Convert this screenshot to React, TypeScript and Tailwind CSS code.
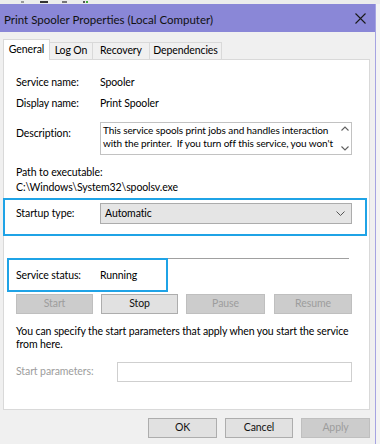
import React from "react";

const font = { fontFamily: 'Lato, "Noto Sans", sans-serif' };

function Btn({ label, w, disabled }: { label: string; w: string; disabled?: boolean }) {
  return (
    <div
      className={`${w} h-[20px] flex items-center justify-center border text-[10.5px] ${
        disabled ? "bg-[#cccccc] border-[#bfbfbf] text-[#9d9d9d]" : "bg-[#e1e1e1] border-[#adadad] text-[#111]"
      }`}
    >
      {label}
    </div>
  );
}

export default function App() {
  return (
    <div className="relative w-[380px] h-[444px] overflow-hidden bg-[#f4f4f4] text-black tracking-[-0.1px]" style={font}>
      {/* background strip */}
      <div className="h-[4px] bg-[#ececec] flex items-start">
        <div className="ml-[21px] mt-[1px] w-[3px] h-[2px] bg-[#9a9a9a]" />
        <div className="ml-[16px] mt-[1px] w-[8px] h-[2px] bg-[#333]" />
        <div className="ml-[14px] mt-[1px] w-[5px] h-[2px] bg-[#777]" />
        <div className="ml-[16px] mt-[1px] w-[2px] h-[2px] bg-[#555]" />
        <div className="ml-[1px] mt-[1px] w-[2px] h-[2px] bg-[#3fae3a]" />
      </div>
      <div className="flex">
        <div className="w-[376px] h-[440px] border-r border-[#a6a4e2] bg-[#f0f0f0] flex flex-col">
          {/* title bar */}
          <div className="h-[28px] bg-[#8a87d7] flex items-center justify-between pl-[4px] pr-[9px]">
            <span className="text-[11.5px] text-[#111] tracking-[0px] mt-[4px]">Print Spooler Properties (Local Computer)</span>
            <svg width="11" height="11" viewBox="0 0 11 11" className="mt-[1px]">
              <path d="M0.5 0.5 L10.5 10.5 M10.5 0.5 L0.5 10.5" stroke="#1a1a1a" strokeWidth="1.1" />
            </svg>
          </div>
          {/* tabs */}
          <div className="pl-[3px] pt-[7px] flex items-end h-[28px] relative z-10 text-[10.5px]">
            <div className="w-[47px] h-[21px] bg-white border border-b-0 border-[#d9d9d9] flex items-center justify-center pb-[1px]">
              General
            </div>
            <div className="w-[43px] h-[18px] border border-l-0 border-[#d9d9d9] flex items-center justify-center">Log On</div>
            <div className="w-[57px] h-[18px] border border-l-0 border-[#d9d9d9] flex items-center justify-center">Recovery</div>
            <div className="w-[72px] h-[18px] border border-l-0 border-[#d9d9d9] flex items-center justify-center">Dependencies</div>
          </div>
          {/* panel */}
          <div className="ml-[3px] -mt-[1px] w-[367px] h-[351px] bg-white border border-[#d9d9d9] pl-[12px] pt-[12px] text-[10.5px] flex flex-col">
            <div className="flex h-[21px] items-center">
              <div className="w-[84px]">Service name:</div>
              <div>Spooler</div>
            </div>
            <div className="flex h-[21px] items-center">
              <div className="w-[84px]">Display name:</div>
              <div>Print Spooler</div>
            </div>
            <div className="flex mt-[8px] items-start">
              <div className="w-[84px] pt-[4px]">Description:</div>
              <div className="w-[252px] h-[33px] border border-[#c2c2c2] flex">
                <div className="flex-1 pl-[2px] pt-[1px] text-[10px] leading-[13px] overflow-hidden whitespace-nowrap">
                  <div>This service spools print jobs and handles interaction</div>
                  <div>with the printer.&nbsp; If you turn off this service, you won't</div>
                </div>
                <div className="w-[13px] flex flex-col items-center justify-between py-[3px] bg-white">
                  <svg width="8" height="5" viewBox="0 0 8 5">
                    <path d="M0.5 4.5 L4 1 L7.5 4.5" stroke="#606060" fill="none" strokeWidth="1.1" />
                  </svg>
                  <svg width="8" height="5" viewBox="0 0 8 5">
                    <path d="M0.5 0.5 L4 4 L7.5 0.5" stroke="#606060" fill="none" strokeWidth="1.1" />
                  </svg>
                </div>
              </div>
            </div>
            <div className="mt-[10px] h-[15px] flex items-center">Path to executable:</div>
            <div className="h-[15px] flex items-center">C:\Windows\System32\spoolsv.exe</div>
            <div className="flex mt-[8px] items-center h-[21px]">
              <div className="w-[84px]">Startup type:</div>
              <div className="w-[252px] h-[21px] bg-[#e5e5e5] border border-[#acacac] flex items-center justify-between pl-[4px] pr-[6px]">
                <span>Automatic</span>
                <svg width="9" height="5" viewBox="0 0 9 5">
                  <path d="M0.5 0.5 L4.5 4.5 L8.5 0.5" stroke="#555" fill="none" strokeWidth="1" />
                </svg>
              </div>
            </div>
            <div className="mt-[34px] w-[333px] h-[1px] bg-[#a0a0a0]" />
            <div className="flex mt-[9px] h-[16px] items-center">
              <div className="w-[84px]">Service status:</div>
              <div>Running</div>
            </div>
            <div className="flex mt-[10px]">
              <Btn label="Start" w="w-[77px]" disabled />
              <div className="w-[8px]" />
              <Btn label="Stop" w="w-[77px]" />
              <div className="w-[8px]" />
              <Btn label="Pause" w="w-[79px]" disabled />
              <div className="w-[9px]" />
              <Btn label="Resume" w="w-[78px]" disabled />
            </div>
            <div className="mt-[11px] leading-[13px] whitespace-nowrap">
              You can specify the start parameters that apply when you start the service
              <br />
              from here.
            </div>
            <div className="flex mt-[11px] items-center h-[20px]">
              <div className="w-[101px] text-[#9d9d9d]">Start parameters:</div>
              <div className="w-[235px] h-[20px] border border-[#cfcfcf] bg-white" />
            </div>
          </div>
          {/* bottom buttons */}
          <div className="flex mt-[8px] pl-[148px]">
            <Btn label="OK" w="w-[69px]" />
            <div className="w-[8px]" />
            <Btn label="Cancel" w="w-[68px]" />
            <div className="w-[8px]" />
            <Btn label="Apply" w="w-[69px]" disabled />
          </div>
        </div>
      </div>
      {/* annotation boxes */}
      <div className="absolute left-[3px] top-[198px] w-[364px] h-[38px] border-2 border-[#1fa3e6]" />
      <div className="absolute left-[7px] top-[258px] w-[161px] h-[34px] border-2 border-[#1fa3e6]" />
    </div>
  );
}
